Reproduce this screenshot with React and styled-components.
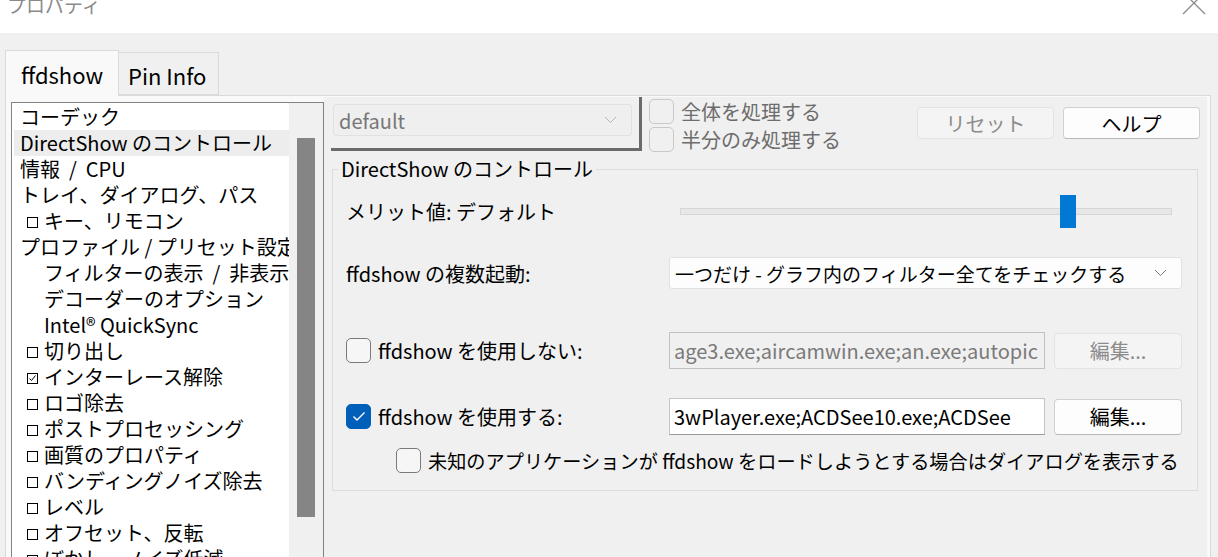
import styled, { createGlobalStyle } from "styled-components";

const GlobalStyle = createGlobalStyle`
  html, body {
    margin: 0;
    padding: 0;
    background: #f0f0f0;
  }
  body {
    font-family: "Noto Sans CJK JP", "Noto Sans", sans-serif;
    color: #000;
  }
`;

const Window = styled.div`
  width: 1218px;
  height: 557px;
  overflow: hidden;
  display: flex;
  flex-direction: column;
  background: #f0f0f0;
`;

const TitleBar = styled.div`
  height: 33px;
  flex: none;
  background: #ffffff;
  display: flex;
  align-items: flex-start;
  justify-content: space-between;
  overflow: hidden;
`;

const Title = styled.div`
  font-size: 19px;
  line-height: 24px;
  color: #8a8a8a;
  margin-top: -7px;
  padding-left: 7px;
`;

const Close = styled.div`
  width: 24px;
  height: 24px;
  margin-top: -9px;
  margin-right: 12px;
`;

const Body = styled.div`
  flex: 1;
  min-height: 0;
  display: flex;
  flex-direction: column;
  padding: 17px 7px 0 5px;
`;

const Tabs = styled.div`
  display: flex;
  align-items: flex-end;
  height: 45px;
  flex: none;
  position: relative;
  z-index: 1;
`;

const Tab = styled.div`
  box-sizing: border-box;
  height: ${(p) => (p.$active ? "46px" : "43px")};
  width: ${(p) => p.$width}px;
  padding-left: ${(p) => (p.$active ? "15px" : "9px")};
  padding-top: ${(p) => (p.$active ? "0" : "3px")};
  margin-bottom: ${(p) => (p.$active ? "-1px" : "0")};
  border: 1px solid #dadada;
  border-left: ${(p) => (p.$active ? "1px solid #dadada" : "none")};
  border-bottom: ${(p) => (p.$active ? "none" : "1px solid #dadada")};
  background: ${(p) => (p.$active ? "#f9f9f9" : "#f0f0f0")};
  font-size: 22px;
  line-height: 40px;
  display: flex;
  align-items: center;
`;

const TabPanel = styled.div`
  flex: 1;
  min-height: 0;
  display: flex;
  border: 1px solid #dadada;
  border-bottom: none;
  background: #f9f9f9;
  padding: 1px 3px 0 5px;
`;

const Tree = styled.div`
  width: 313px;
  box-sizing: border-box;
  margin-top: 5px;
  flex: none;
  display: flex;
  background: #ffffff;
  border: 1px solid #828282;
  border-bottom: none;
`;

const TreeList = styled.div`
  width: 277px;
  padding: 1px 0 0 2px;
  box-sizing: border-box;
  flex: none;
`;

const TreeItem = styled.div`
  height: 26px;
  line-height: 26px;
  font-size: 20px;
  white-space: nowrap;
  overflow: hidden;
  padding-left: ${(p) => p.$indent}px;
  background: ${(p) => (p.$selected ? "#ededed" : "transparent")};
  display: flex;
  align-items: center;
`;

const TreeText = styled.span`
  white-space: pre;
`;

const TreeBox = styled.span`
  width: 9px;
  height: 9px;
  border: 1px solid #000;
  margin-right: 6px;
  flex: none;
  display: flex;
  align-items: center;
  justify-content: center;
  margin-top: 2px;
`;

const ScrollBar = styled.div`
  flex: 1;
  background: #f0f0f0;
  padding-left: 8px;
`;

const Thumb = styled.div`
  width: 18px;
  height: 379px;
  margin-top: 35px;
  background: #858585;
`;

const Page = styled.div`
  flex: 1;
  background: #f0f0f0;
  display: flex;
  flex-direction: column;
`;

const TopRow = styled.div`
  display: flex;
  align-items: flex-start;
`;

const PresetFrame = styled.div`
  margin-left: 7px;
  padding: 7px 7px 12px 2px;
  border-right: 3px solid #6b6b6b;
  border-bottom: 3px solid #6b6b6b;
`;

const Combo = styled.div`
  box-sizing: border-box;
  width: ${(p) => p.$width}px;
  height: 32px;
  border: 1px solid #e1e1e1;
  border-radius: 3px;
  background: ${(p) => (p.$disabled ? "#efefef" : "#fdfdfd")};
  color: ${(p) => (p.$disabled ? "#777777" : "#000")};
  font-size: ${(p) => p.$size || 20}px;
  display: flex;
  align-items: center;
  justify-content: space-between;
  padding: 0 14px 0 5px;
  white-space: nowrap;
  grid-column: ${(p) => p.$span || "auto"};
`;

const ChecksColumn = styled.div`
  margin-left: 7px;
  padding-top: 2px;
  display: flex;
  flex-direction: column;
  gap: 3px;
`;

const CheckRow = styled.label`
  display: flex;
  align-items: center;
  gap: 7px;
  height: 25px;
  font-size: ${(p) => p.$size || 20}px;
  white-space: nowrap;
  color: ${(p) => (p.$disabled ? "#6d6d6d" : "#000")};
`;

const Box = styled.span`
  box-sizing: border-box;
  width: 25px;
  height: 25px;
  flex: none;
  border-radius: 5px;
  border: 1px solid
    ${(p) => (p.$checked ? "#005fb8" : p.$disabled ? "#c8c8c8" : "#7a7a7a")};
  background: ${(p) => (p.$checked ? "#005fb8" : p.$disabled ? "#f0f0f0" : "#f6f6f6")};
  display: flex;
  align-items: center;
  justify-content: center;
`;

const Buttons = styled.div`
  margin-left: auto;
  margin-right: 7px;
  margin-top: 10px;
  display: flex;
  gap: 9px;
`;

const Button = styled.div`
  box-sizing: border-box;
  width: ${(p) => p.$width || 137}px;
  height: ${(p) => p.$height || 32}px;
  border-radius: 4px;
  border: 1px solid ${(p) => (p.$disabled ? "#e3e3e3" : "#d0d0d0")};
  border-bottom-color: ${(p) => (p.$disabled ? "#e3e3e3" : "#b8b8b8")};
  background: ${(p) => (p.$disabled ? "#f4f4f4" : "#fdfdfd")};
  color: ${(p) => (p.$disabled ? "#8c8c8c" : "#000")};
  font-size: 20px;
  display: flex;
  align-items: center;
  justify-content: center;
`;

const Group = styled.fieldset`
  margin: 5px 9px 0 8px;
  padding: 14px 15px 17px 13px;
  border: 1px solid #dcdcdc;
  min-inline-size: 0;
`;

const Legend = styled.legend`
  font-size: 20px;
  line-height: 24px;
  margin-left: -8px;
  padding: 0 3px;
`;

const Row = styled.div`
  display: grid;
  grid-template-columns: 314px 376px 128px;
  column-gap: 9px;
  align-items: center;
  height: ${(p) => p.$height}px;
  margin-top: ${(p) => p.$gap || 0}px;
`;

const Label = styled.div`
  font-size: 20px;
  white-space: nowrap;
  padding-left: ${(p) => p.$indent || 0}px;
  grid-column: ${(p) => p.$span || "auto"};
`;

const Slider = styled.div`
  grid-column: 2 / 4;
  margin: 0 10px 0 11px;
  height: 33px;
  position: relative;
  display: flex;
  align-items: center;
`;

const Track = styled.div`
  flex: 1;
  height: 5px;
  background: #e7e7e7;
  border: 1px solid #d6d6d6;
`;

const SliderThumb = styled.div`
  position: absolute;
  left: 380px;
  top: 0;
  width: 16px;
  height: 33px;
  background: #0078d4;
`;

const TextBox = styled.div`
  box-sizing: border-box;
  height: 37px;
  border: 1px solid ${(p) => (p.$disabled ? "#c2c2c2" : "#c6c6c6")};
  border-bottom-color: ${(p) => (p.$disabled ? "#c2c2c2" : "#9a9a9a")};
  background: ${(p) => (p.$disabled ? "#f0f0f0" : "#ffffff")};
  color: ${(p) => (p.$disabled ? "#7a7a7a" : "#000")};
  font-size: 20px;
  line-height: 35px;
  padding-left: 4px;
  white-space: nowrap;
  overflow: hidden;
`;

const Chevron = ({ color = "#7a7a7a" }) => (
  <svg width="13" height="8" viewBox="0 0 13 8">
    <path d="M1 1 L6.5 6.5 L12 1" fill="none" stroke={color} strokeWidth="1" />
  </svg>
);

const Tick = () => (
  <svg width="14" height="11" viewBox="0 0 14 11">
    <path d="M1.5 5.5 L5 9 L12.5 1.5" fill="none" stroke="#fff" strokeWidth="1.4" />
  </svg>
);

const treeItems = [
  { text: "コーデック", indent: 6 },
  { text: "DirectShow のコントロール", indent: 6, selected: true },
  { text: "情報  /  CPU", indent: 6 },
  { text: "トレイ、ダイアログ、パス", indent: 6 },
  { text: "キー、リモコン", indent: 13, box: true },
  { text: "プロファイル / プリセット設定", indent: 6 },
  { text: "フィルターの表示  /  非表示", indent: 30 },
  { text: "デコーダーのオプション", indent: 30 },
  { text: "Intel® QuickSync", indent: 30 },
  { text: "切り出し", indent: 13, box: true },
  { text: "インターレース解除", indent: 13, box: true, checked: true },
  { text: "ロゴ除去", indent: 13, box: true },
  { text: "ポストプロセッシング", indent: 13, box: true },
  { text: "画質のプロパティ", indent: 13, box: true },
  { text: "バンディングノイズ除去", indent: 13, box: true },
  { text: "レベル", indent: 13, box: true },
  { text: "オフセット、反転", indent: 13, box: true },
  { text: "ぼかし、ノイズ低減", indent: 13, box: true },
];

const App = () => {
  return (
    <Window>
      <GlobalStyle />
      <TitleBar>
        <Title>プロパティ</Title>
        <Close>
          <svg width="24" height="24" viewBox="0 0 24 24">
            <path d="M1 1 L23 23 M23 1 L1 23" stroke="#8a8a8a" strokeWidth="1.3" />
          </svg>
        </Close>
      </TitleBar>

      <Body>
        <Tabs>
          <Tab $active $width={114}>ffdshow</Tab>
          <Tab $width={100}>Pin Info</Tab>
        </Tabs>

        <TabPanel>
          <Tree>
            <TreeList>
              {treeItems.map((item) => (
                <TreeItem key={item.text} $indent={item.indent} $selected={item.selected}>
                  {item.box && (
                    <TreeBox>
                      {item.checked && (
                        <svg width="7" height="7" viewBox="0 0 7 7">
                          <path d="M0.5 3.5 L2.5 5.5 L6.5 0.5" fill="none" stroke="#000" strokeWidth="1" />
                        </svg>
                      )}
                    </TreeBox>
                  )}
                  <TreeText>{item.text}</TreeText>
                </TreeItem>
              ))}
            </TreeList>
            <ScrollBar>
              <Thumb />
            </ScrollBar>
          </Tree>

          <Page>
            <TopRow>
              <PresetFrame>
                <Combo $disabled $width={299}>
                  default
                  <Chevron color="#b5b5b5" />
                </Combo>
              </PresetFrame>
              <ChecksColumn>
                <CheckRow $disabled>
                  <Box $disabled />
                  全体を処理する
                </CheckRow>
                <CheckRow $disabled>
                  <Box $disabled />
                  半分のみ処理する
                </CheckRow>
              </ChecksColumn>
              <Buttons>
                <Button $disabled>リセット</Button>
                <Button>ヘルプ</Button>
              </Buttons>
            </TopRow>

            <Group>
              <Legend>DirectShow のコントロール</Legend>

              <Row $height={33}>
                <Label>メリット値: デフォルト</Label>
                <Slider>
                  <Track />
                  <SliderThumb />
                </Slider>
              </Row>

              <Row $height={32} $gap={29}>
                <Label>ffdshow の複数起動:</Label>
                <Combo $width={513} $span="2 / 4" $size={19}>
                  一つだけ - グラフ内のフィルター全てをチェックする
                  <Chevron />
                </Combo>
              </Row>

              <Row $height={37} $gap={43}>
                <CheckRow>
                  <Box />
                  ffdshow を使用しない:
                </CheckRow>
                <TextBox $disabled>age3.exe;aircamwin.exe;an.exe;autopic</TextBox>
                <Button $disabled $width={128} $height={36}>編集...</Button>
              </Row>

              <Row $height={37} $gap={29}>
                <CheckRow>
                  <Box $checked>
                    <Tick />
                  </Box>
                  ffdshow を使用する:
                </CheckRow>
                <TextBox>3wPlayer.exe;ACDSee10.exe;ACDSee</TextBox>
                <Button $width={128} $height={36}>編集...</Button>
              </Row>

              <Row $height={25} $gap={13}>
                <Label $span="1 / 4" $indent={50}>
                  <CheckRow $size={19.2}>
                    <Box />
                    未知のアプリケーションが ffdshow をロードしようとする場合はダイアログを表示する
                  </CheckRow>
                </Label>
              </Row>
            </Group>
          </Page>
        </TabPanel>
      </Body>
    </Window>
  );
};

export default App;
